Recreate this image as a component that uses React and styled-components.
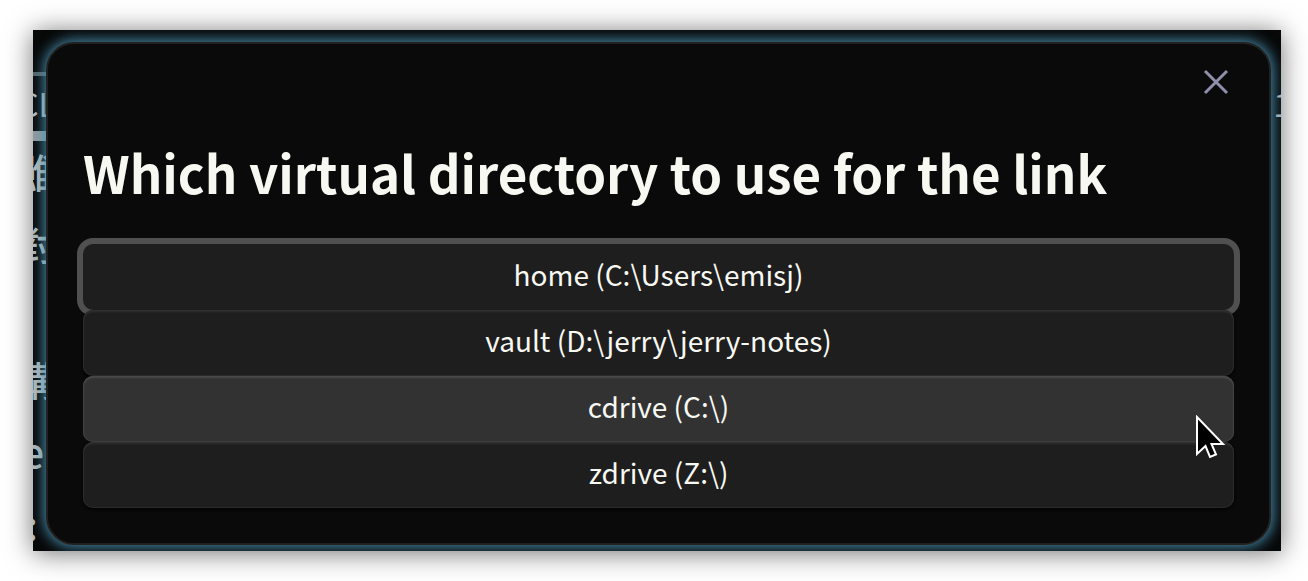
import React from "react";
import styled, { createGlobalStyle } from "styled-components";

const GlobalStyle = createGlobalStyle`
  * { box-sizing: border-box; }
  body {
    margin: 0;
    background: #fff;
    color: #f8f8f2;
    font-family: "Noto Sans CJK TC", "Noto Sans", sans-serif;
  }
`;

const Page = styled.main`
  min-height: 100vh;
  display: flex;
  flex-direction: column;
  padding: 30px 27px 30px 33px;
`;

const Backdrop = styled.div`
  flex: 1;
  display: grid;
  grid-template-columns: 13px minmax(0, 1fr) 10px;
  overflow: hidden;
  background: #070808;
  box-shadow: 0 2px 25px 0 rgba(0, 0, 0, 0.56);
`;

const Strip = styled.aside`
  display: flex;
  flex-direction: column;
  align-items: flex-end;
  height: 0;
  min-height: 100%;
  padding-top: ${(p) => (p.$side === "left" ? 42 : 46)}px;
  color: #b4bab8;
`;

const Rule = styled.hr`
  flex: none;
  align-self: stretch;
  height: ${(p) => (p.$thick ? 10 : 4)}px;
  margin: 0;
  border: 0;
  background: ${(p) => (p.$thick ? "#929a9e" : "#566064")};
`;

const TableCell = styled.span`
  flex: none;
  margin-right: -10px;
  font-size: 32px;
  line-height: 55px;
`;

const Lines = styled.div`
  flex: none;
  display: flex;
  flex-direction: column;
  align-items: flex-end;
  gap: 12px;
  margin: 0 -10px 76px 0;
  font-size: 40px;
  font-weight: 500;
  line-height: 60px;
`;

const Dialog = styled.section`
  position: relative;
  z-index: 1;
  display: flex;
  flex-direction: column;
  margin: 12px 0 6px;
  padding: 18px 35px 34px;
  border: 2px solid #222122;
  border-radius: 28px;
  background: #0a0a0a;
  box-shadow: 0 0 14px 2px rgba(75, 148, 180, 0.95);
`;

const CloseButton = styled.button`
  align-self: flex-end;
  display: flex;
  margin-right: -2px;
  padding: 4px;
  border: 0;
  background: none;
  color: #8f8fae;
`;

const Title = styled.h1`
  margin: 34px 0 36px;
  font-size: 51px;
  line-height: 72px;
  font-weight: 700;
`;

const Choices = styled.div`
  display: flex;
  flex-direction: column;
`;

const Choice = styled.button`
  padding: 8px 16px 14px;
  border: 0;
  border-radius: 10px;
  background: ${(p) => (p.$hovered ? "#323232" : "#1e1e1e")};
  color: inherit;
  font: inherit;
  font-size: 28px;
  line-height: 44px;
  box-shadow: ${(p) =>
    p.$focused
      ? "0 0 0 6px #505050"
      : p.$hovered
        ? "inset 0 2px 2px #4a4a4a, inset 0 0 0 1px #404040"
        : "inset 0 2px 2px #303030, inset 0 0 0 1px #2a2a2a, 0 2px 3px #030303"};
`;

const Cursor = styled.svg`
  position: absolute;
  right: 42px;
  bottom: 84px;
`;

const directories = [
  { label: "home (C:\\Users\\emisj)", focused: true },
  { label: "vault (D:\\jerry\\jerry-notes)" },
  { label: "cdrive (C:\\)", hovered: true },
  { label: "zdrive (Z:\\)" },
];

export default function App() {
  return (
    <>
      <GlobalStyle />
      <Page>
        <Backdrop>
          <Strip $side="left">
            <Rule />
            <TableCell>CL</TableCell>
            <Rule $thick />
            <Lines>
              <span>雖</span>
              <span>對</span>
            </Lines>
            <Lines>
              <span>講</span>
              <span>e:</span>
              <span>:&nbsp;&nbsp;</span>
            </Lines>
          </Strip>
          <Dialog role="dialog" aria-labelledby="dialog-title">
            <CloseButton aria-label="Close">
              <svg width="32" height="32" viewBox="0 0 32 32" fill="none" stroke="currentColor" strokeWidth="3">
                <path d="M5 5 27 27M27 5 5 27" />
              </svg>
            </CloseButton>
            <Title id="dialog-title">Which virtual directory to use for the link</Title>
            <Choices>
              {directories.map((d) => (
                <Choice key={d.label} $focused={d.focused} $hovered={d.hovered}>
                  {d.label}
                </Choice>
              ))}
            </Choices>
            <Cursor width="32" height="44" viewBox="0 0 32 44" aria-hidden="true">
              <path d="M2 2V39L10.500 31 15 42 21 39.500 16.500 29H28Z" fill="#000" stroke="#fff" strokeWidth="2" />
            </Cursor>
          </Dialog>
          <Strip $side="right">
            <TableCell>1</TableCell>
          </Strip>
        </Backdrop>
      </Page>
    </>
  );
}
